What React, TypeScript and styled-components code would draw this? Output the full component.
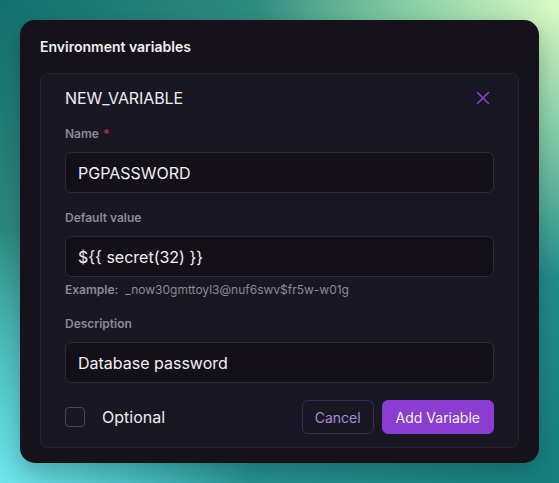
import React from "react";
import styled, { createGlobalStyle } from "styled-components";

const Global = createGlobalStyle`
  html, body { margin: 0; padding: 0; }
  body {
    width: 559px;
    height: 483px;
    overflow: hidden;
    font-family: Inter, "Noto Sans", sans-serif;
    background:
      radial-gradient(ellipse 75% 80% at 100% 0%, #dcfbc4 0%, rgba(180,235,180,0.65) 35%, rgba(120,200,160,0) 72%),
      radial-gradient(ellipse 60% 70% at 0% 100%, #6ee6ee 0%, rgba(90,215,225,0.6) 40%, rgba(60,180,190,0) 75%),
      linear-gradient(135deg, #14706f 0%, #3f9e8c 40%, #2c9a98 60%, #17807f 100%);
  }
  * { box-sizing: border-box; }
`;

const Page = styled.div`
  padding: 20px;
`;

const Card = styled.section`
  width: 519px;
  height: 443px;
  background: #15121c;
  border-radius: 15px;
  padding: 17px 20px 17px 20px;
  box-shadow: 0 8px 24px rgba(0, 0, 0, 0.25);
  display: flex;
  flex-direction: column;
`;

const Title = styled.h2`
  margin: 0 0 16px 0;
  font-size: 14px;
  line-height: 20px;
  font-weight: 600;
  color: #f2f0f5;
`;

const Panel = styled.div`
  background: #1a1724;
  border: 1px solid #26222f;
  border-radius: 7px;
  padding: 12px 24px 13px 24px;
  display: flex;
  flex-direction: column;
`;

const Header = styled.div`
  display: flex;
  align-items: center;
  justify-content: space-between;
  height: 24px;
  margin-bottom: 15px;
`;

const HeaderName = styled.span`
  font-size: 16px;
  color: #eeecf2;
  letter-spacing: -0.1px;
`;

const CloseButton = styled.button`
  background: none;
  border: none;
  padding: 0;
  margin-right: 3px;
  width: 16px;
  height: 16px;
  display: flex;
  align-items: center;
  justify-content: center;
  cursor: pointer;
`;

const Field = styled.div`
  display: flex;
  flex-direction: column;
  margin-bottom: 16px;
`;

const Label = styled.label`
  font-size: 12px;
  line-height: 18px;
  font-weight: 600;
  color: #8d8996;
  margin-bottom: 9px;
`;

const Required = styled.span`
  color: #b0303a;
  margin-left: 4px;
`;

const Input = styled.input`
  height: 41px;
  width: 100%;
  background: #131019;
  border: 1px solid #2e2a38;
  border-radius: 6px;
  padding: 0 12px;
  font-family: Inter, "Noto Sans", sans-serif;
  font-size: 16px;
  color: #f1eff4;
  outline: none;
`;

const Hint = styled.div`
  margin-top: 4px;
  font-size: 12px;
  line-height: 18px;
  color: #8d8996;
`;

const HintKey = styled.span`
  font-weight: 600;
  margin-right: 7px;
`;

const Footer = styled.div`
  display: flex;
  align-items: center;
  justify-content: space-between;
  margin-top: 1px;
`;

const CheckRow = styled.label`
  display: flex;
  align-items: center;
  gap: 17px;
  font-size: 16px;
  color: #eeecf2;
`;

const Box = styled.span`
  width: 20px;
  height: 20px;
  border: 1px solid #4a4652;
  border-radius: 4px;
  display: inline-block;
`;

const Actions = styled.div`
  display: flex;
  gap: 8px;
`;

const Button = styled.button<{ $primary?: boolean }>`
  height: 34px;
  padding: 0 ${(p) => (p.$primary ? "13px" : "12px")};
  border-radius: 6px;
  font-family: Inter, "Noto Sans", sans-serif;
  font-size: 14px;
  cursor: pointer;
  border: 1px solid ${(p) => (p.$primary ? "#8a3dd0" : "#3a2b55")};
  background: ${(p) => (p.$primary ? "#8a3dd0" : "transparent")};
  color: ${(p) => (p.$primary ? "#f6f2fb" : "#a88ad2")};
`;

export default function App() {
  return (
    <>
      <Global />
      <Page>
        <Card>
          <Title>Environment variables</Title>
          <Panel>
            <Header>
              <HeaderName>NEW_VARIABLE</HeaderName>
              <CloseButton aria-label="Close">
                <svg width="14" height="14" viewBox="0 0 14 14">
                  <path d="M1.5 1.5 L12.5 12.5 M12.5 1.5 L1.5 12.5" stroke="#8b3fd3" strokeWidth="1.6" strokeLinecap="round" />
                </svg>
              </CloseButton>
            </Header>
            <Field>
              <Label>
                Name<Required>*</Required>
              </Label>
              <Input defaultValue="PGPASSWORD" />
            </Field>
            <Field>
              <Label>Default value</Label>
              <Input defaultValue="${{ secret(32) }}" />
              <Hint>
                <HintKey>Example:</HintKey>_now30gmttoyl3@nuf6swv$fr5w-w01g
              </Hint>
            </Field>
            <Field>
              <Label>Description</Label>
              <Input defaultValue="Database password" />
            </Field>
            <Footer>
              <CheckRow>
                <Box />
                Optional
              </CheckRow>
              <Actions>
                <Button>Cancel</Button>
                <Button $primary>Add Variable</Button>
              </Actions>
            </Footer>
          </Panel>
        </Card>
      </Page>
    </>
  );
}
